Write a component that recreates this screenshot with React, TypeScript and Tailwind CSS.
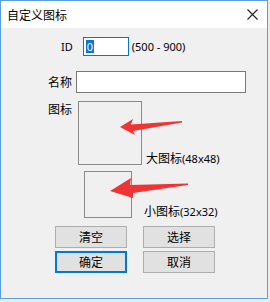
import React from "react";

const font = { fontFamily: '"Noto Sans CJK SC", "Noto Sans", sans-serif' };
const latin = { fontFamily: '"Noto Sans", "Noto Sans CJK SC", sans-serif' };

export default function App() {
  return (
    <div className="w-[270px] h-[302px] bg-[#ececec] text-[12px] text-black leading-none" style={font}>
      <div className="relative w-[268px] h-[299px] border border-[#5a9fe6] bg-[#f0f0f0] flex flex-col">
        <div className="h-[27px] bg-white flex items-center justify-between pl-[6px] pr-[9px] shrink-0">
          <span className="text-[12px]">自定义图标</span>
          <svg width="11" height="11" viewBox="0 0 11 11">
            <path d="M0.5 0.5 L10.5 10.5 M10.5 0.5 L0.5 10.5" stroke="#222" strokeWidth="1.1" />
          </svg>
        </div>

        {/* ID row */}
        <div className="flex items-center mt-[9px] pl-[60px]">
          <span style={latin} className="text-[11px]">ID</span>
          <div className="ml-[10px] w-[46px] h-[19px] border border-[#0078d7] bg-white flex items-center pl-[2px]">
            <span style={latin} className="bg-[#0078d7] text-white px-[1px] text-[11px] leading-[13px]">0</span>
          </div>
          <span style={latin} className="ml-[3px] text-[11px]">(500 - 900)</span>
        </div>

        {/* name row */}
        <div className="flex items-center mt-[15px] pl-[47px]">
          <span className="w-[24px]">名称</span>
          <div className="ml-[4px] w-[170px] h-[22px] border border-[#7a7a7a] bg-white" />
        </div>

        {/* big icon row */}
        <div className="flex items-start mt-[8px] pl-[47px]">
          <span className="w-[24px] mt-[2px]">图标</span>
          <div className="ml-[6px] w-[64px] h-[64px] border border-[#8a8a8a]" />
          <span className="ml-[4px] self-end mb-[1px]">
            大图标<span style={latin} className="text-[11px]">(48x48)</span>
          </span>
        </div>

        {/* small icon row */}
        <div className="flex items-end mt-[6px] pl-[83px]">
          <div className="w-[48px] h-[47px] border border-[#8a8a8a]" />
          <span className="ml-[12px] mb-[1px]">
            小图标<span style={latin} className="text-[11px]">(32x32)</span>
          </span>
        </div>

        {/* buttons */}
        <div className="grid grid-cols-[72px_72px] gap-x-[16px] gap-y-[3px] mt-[8px] pl-[54px]">
          <button className="h-[22px] border border-[#adadad] bg-[#e1e1e1] flex items-center justify-center">清空</button>
          <button className="h-[22px] border border-[#adadad] bg-[#e1e1e1] flex items-center justify-center">选择</button>
          <button className="h-[22px] border-2 border-[#0078d7] bg-[#e1e1e1] flex items-center justify-center">确定</button>
          <button className="h-[22px] border border-[#adadad] bg-[#e1e1e1] flex items-center justify-center">取消</button>
        </div>

        {/* red arrows overlay */}
        <svg className="absolute left-[-1px] top-[-1px] pointer-events-none" width="270" height="302" viewBox="0 0 270 302">
          <polygon
            points="120,127 133,119 131,124.5 182,121 182,122.5 133,131 135,135"
            fill="#f03434"
          />
          <polygon
            points="110,191 131,178 130,185 188,183.5 188,185 133,193 133,198"
            fill="#f03434"
          />
        </svg>
      </div>
    </div>
  );
}
